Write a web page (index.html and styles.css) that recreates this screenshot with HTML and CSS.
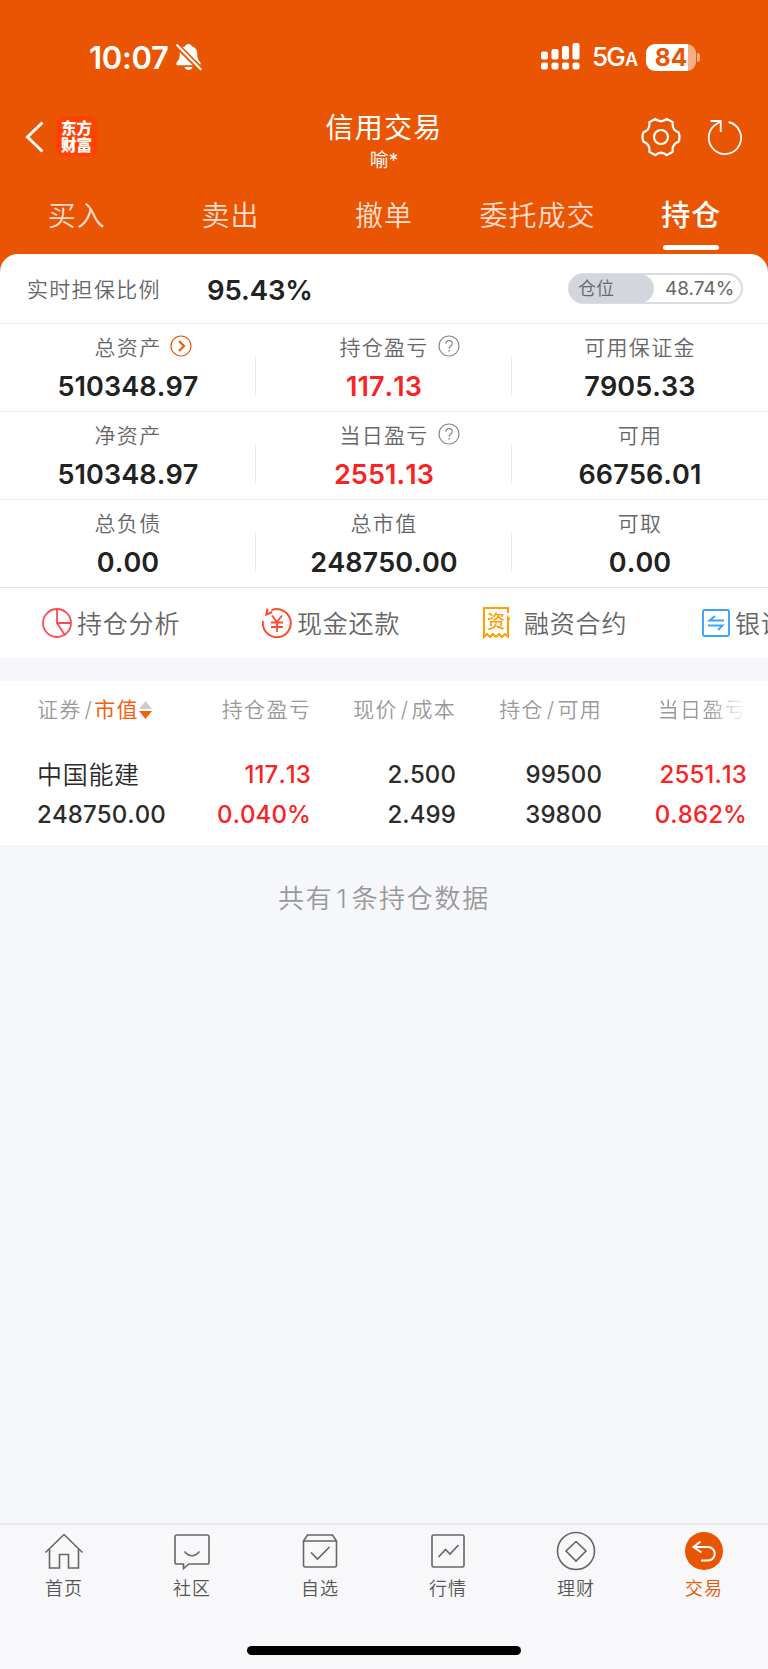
FILE: index.html
```html
<!DOCTYPE html>
<html lang="zh-CN">
<head>
    <meta charset="UTF-8">
    <meta name="viewport" content="width=device-width, initial-scale=1.0">
    <title>信用交易</title>
    <link rel="stylesheet" href="styles.css">
</head>
<body>
    <div class="app">
        <header class="header">
            <!-- Status bar -->
            <div class="status-bar">
                <span class="clock">10:07</span>
                <svg class="bell" width="26" height="28" viewBox="0 0 26 28">
                    <path d="M12.500 1c1.800 0 3 1 3.300 2.300 3.900 1.200 5.500 4 5.500 7.500 0 5 1.200 6.500 2.900 8.500 1 1.400.4 3-1.300 3H2.100c-1.700 0-2.300-1.600-1.300-3 1.700-2 2.900-3.500 2.900-8.500 0-3.500 1.600-6.300 5.500-7.500C9.500 2 10.700 1 12.500 1z" fill="#fff"/>
                    <path d="M8.500 24h8c-.6 1.800-2 3-4 3s-3.400-1.200-4-3z" fill="#fff"/>
                    <path d="M0 1.500l25 25" stroke="#ea5504" stroke-width="5.500"/>
                    <path d="M1.200 2.200l23.500 24" stroke="#fff" stroke-width="2.200" stroke-linecap="round"/>
                </svg>
                <svg class="signal" width="39" height="28" viewBox="0 0 39 28" fill="#fff">
                    <rect x="0" y="8.500" width="7" height="8" rx="2"/>
                    <rect x="10.500" y="6" width="7" height="10.500" rx="2"/>
                    <rect x="21" y="3" width="7" height="13.500" rx="2"/>
                    <rect x="31.500" y="0" width="7" height="16.500" rx="2"/>
                    <rect x="0" y="19.500" width="7" height="7" rx="2"/>
                    <rect x="10.500" y="19.500" width="7" height="7" rx="2"/>
                    <rect x="21" y="19.500" width="7" height="7" rx="2"/>
                    <rect x="31.500" y="19.500" width="7" height="7" rx="2"/>
                </svg>
                <span class="network">5G<small>A</small></span>
                <span class="battery">84</span>
                <span class="battery-tip"></span>
            </div>

            <!-- Title bar -->
            <div class="title-bar">
                <div class="title-left">
                    <svg width="19" height="32" viewBox="0 0 19 32" fill="none" stroke="#fff" stroke-width="3">
                        <path d="M17.500 1.500L2.500 16l15 14.500"/>
                    </svg>
                    <div class="logo">东方<br>财富</div>
                </div>
                <div class="title-center">
                    <h1>信用交易</h1>
                    <p>喻*</p>
                </div>
                <div class="title-right">
                    <svg width="40" height="40" viewBox="0 0 40 40" fill="none" stroke="#fff" stroke-width="2.200" stroke-linejoin="round">
                        <path d="M14.200 1.900Q20 6.600 25.800 1.900L31.700 5.300Q30.600 12.700 37.600 15.400Q39.400 20 37.600 24.600Q30.600 27.300 31.700 34.700L25.800 38.100Q20 33.400 14.200 38.100L8.300 34.700Q9.400 27.300 2.400 24.600Q0.600 20 2.400 15.400Q9.400 12.700 8.300 5.300Z"/>
                        <circle cx="20" cy="20" r="7"/>
                    </svg>
                    <svg width="36" height="36" viewBox="0 0 36 36" fill="none" stroke="#fff" stroke-width="1.800">
                        <path d="M21.500 3a16.200 16.200 0 1 1-13.500 3L13.500 2.500"/>
                        <path d="M3.500 2h10.200v11"/>
                    </svg>
                </div>
            </div>

            <!-- Trade tabs -->
            <nav class="trade-tabs">
                <a class="trade-tab">买入</a>
                <a class="trade-tab">卖出</a>
                <a class="trade-tab">撤单</a>
                <a class="trade-tab">委托成交</a>
                <a class="trade-tab active">持仓</a>
            </nav>
        </header>

        <!-- Account summary -->
        <section class="summary">
            <div class="ratio-row">
                <span class="ratio-label">实时担保比例</span>
                <span class="ratio-value">95.43%</span>
                <div class="position-pill">
                    <span class="pill-fill">仓位</span>
                    <span class="pill-value">48.74%</span>
                </div>
            </div>
            <div class="asset-row">
                <div class="asset">
                    <div class="asset-label">总资产
                        <svg class="asset-icon" width="22" height="22" viewBox="0 0 22 22" fill="none" stroke="#ea5504">
                            <circle cx="11" cy="11" r="10" stroke-width="1.200"/>
                            <path d="M9 6l5 5-5 5" stroke-width="2"/>
                        </svg>
                    </div>
                    <div class="asset-value">510348.97</div>
                </div>
                <div class="asset">
                    <div class="asset-label">持仓盈亏
                        <svg class="asset-icon" width="22" height="22" viewBox="0 0 22 22" fill="none" stroke="#888" stroke-width="1.200">
                            <circle cx="11" cy="11" r="10"/>
                            <path d="M7.800 8.800c0-4.200 6.600-4.200 6.600-.3 0 2.500-3.300 2.400-3.300 5.200M11.100 15v1.800"/>
                        </svg>
                    </div>
                    <div class="asset-value up">117.13</div>
                </div>
                <div class="asset">
                    <div class="asset-label">可用保证金</div>
                    <div class="asset-value">7905.33</div>
                </div>
            </div>
            <div class="asset-row">
                <div class="asset">
                    <div class="asset-label">净资产</div>
                    <div class="asset-value">510348.97</div>
                </div>
                <div class="asset">
                    <div class="asset-label">当日盈亏
                        <svg class="asset-icon" width="22" height="22" viewBox="0 0 22 22" fill="none" stroke="#888" stroke-width="1.200">
                            <circle cx="11" cy="11" r="10"/>
                            <path d="M7.800 8.800c0-4.200 6.600-4.200 6.600-.3 0 2.500-3.300 2.400-3.300 5.200M11.100 15v1.800"/>
                        </svg>
                    </div>
                    <div class="asset-value up">2551.13</div>
                </div>
                <div class="asset">
                    <div class="asset-label">可用</div>
                    <div class="asset-value">66756.01</div>
                </div>
            </div>
            <div class="asset-row">
                <div class="asset">
                    <div class="asset-label">总负债</div>
                    <div class="asset-value">0.00</div>
                </div>
                <div class="asset">
                    <div class="asset-label">总市值</div>
                    <div class="asset-value">248750.00</div>
                </div>
                <div class="asset">
                    <div class="asset-label">可取</div>
                    <div class="asset-value">0.00</div>
                </div>
            </div>
        </section>

        <!-- Shortcuts, scrolls sideways -->
        <section class="shortcuts">
            <a class="shortcut">
                <svg width="30" height="30" viewBox="0 0 30 30" fill="none" stroke="#ff4a50" stroke-width="1.800">
                    <circle cx="15" cy="15" r="14"/>
                    <path d="M15 1v14h14M15 15l7.500 11.500"/>
                </svg>
                <span>持仓分析</span>
            </a>
            <a class="shortcut">
                <svg width="30" height="30" viewBox="0 0 30 30" fill="none" stroke="#ff4a30" stroke-width="2">
                    <path d="M9.500 2.200A14 14 0 1 1 1 13M5.500 0.500L4.200 6.500l6-2.500"/>
                    <path d="M10 7.500l5 6.500 5-6.500M15 14v10M9 14.500h12M9 19h12" stroke-width="1.800"/>
                </svg>
                <span>现金还款</span>
            </a>
            <a class="shortcut wide">
                <svg width="30" height="32" viewBox="0 0 30 32" fill="none" stroke="#ffa000" stroke-width="2">
                    <path d="M26 6V1H2v29l3-3 3 3 3-3 3 3 3-3 3 3 3-3 3 2.500V12"/>
                    <path d="M25 8l3.500 4-3.500 3z" fill="#ffa000" stroke="none"/>
                    <text class="contract-glyph" x="14" y="21" text-anchor="middle">资</text>
                </svg>
                <span>融资合约</span>
            </a>
            <a class="shortcut">
                <svg width="28" height="28" viewBox="0 0 28 28" fill="none" stroke="#3aa4fa" stroke-width="1.900">
                    <rect x="1" y="1" width="26" height="26" rx="1.500"/>
                    <path d="M22 11.500H7.500L13 7M6 16.500h14.500L16 21"/>
                </svg>
                <span>银证转账</span>
            </a>
        </section>

        <!-- Holdings -->
        <section class="holdings">
            <div class="holdings-row holdings-head">
                <div class="sort">证券<i>/</i><b>市值</b><svg width="13" height="18" viewBox="0 0 13 18">
                        <path d="M6.500 0L13 8H0z" fill="#ccc"/>
                        <path d="M6.500 18L13 10H0z" fill="#f95e0c"/>
                    </svg>
                </div>
                <div>持仓盈亏</div>
                <div>现价<i>/</i>成本</div>
                <div>持仓<i>/</i>可用</div>
                <div class="fade">当日盈亏</div>
            </div>
            <div class="holdings-row holdings-item">
                <div><strong>中国能建</strong><span>248750.00</span></div>
                <div class="up"><span>117.13</span><span>0.040%</span></div>
                <div><span>2.500</span><span>2.499</span></div>
                <div><span>99500</span><span>39800</span></div>
                <div class="up"><span>2551.13</span><span>0.862%</span></div>
            </div>
        </section>
        <p class="total">共有<span>1</span>条持仓数据</p>

        <!-- Bottom navigation -->
        <footer class="bottom-bar">
            <nav class="bottom-nav">
                <a class="nav-item">
                    <svg width="40" height="40" viewBox="0 0 40 40">
                        <path d="M1.500 21.500L20 3.500l18.500 18M5.500 18v19h10V23.500h9V37h10V18"/>
                    </svg>
                    <span>首页</span>
                </a>
                <a class="nav-item">
                    <svg width="40" height="40" viewBox="0 0 40 40">
                        <path d="M5 4h30q2 0 2 2v25.500q0 1.500-2 1.500H17l-5.500 4.500V33H5q-2 0-2-1.500V6q0-2 2-2z"/>
                        <path d="M12.500 20.500q7.500 8.500 15 0"/>
                    </svg>
                    <span>社区</span>
                </a>
                <a class="nav-item">
                    <svg width="40" height="40" viewBox="0 0 40 40">
                        <path d="M3.500 10L7.500 4h25l4 6v24q0 2-2 2h-29q-2 0-2-2zM3.500 10h33M11 21.500l6.500 6.500L29.500 16"/>
                    </svg>
                    <span>自选</span>
                </a>
                <a class="nav-item">
                    <svg width="40" height="40" viewBox="0 0 40 40">
                        <rect x="4" y="4" width="32" height="32" rx="1.500"/>
                        <path d="M10.500 26l7-7.500 4.500 4.500 8.500-9"/>
                    </svg>
                    <span>行情</span>
                </a>
                <a class="nav-item">
                    <svg width="40" height="40" viewBox="0 0 40 40">
                        <circle cx="20" cy="20" r="18.500"/>
                        <path d="M20 10.500l10 9.500-10 10-10-10z"/>
                    </svg>
                    <span>理财</span>
                </a>
                <a class="nav-item active">
                    <svg width="40" height="40" viewBox="0 0 40 40">
                        <circle cx="20" cy="20" r="19"/>
                        <path d="M16.500 10.500L9.500 16l8 5.500M9.500 16H24a6.700 6.700 0 0 1 0 13.500H17"/>
                    </svg>
                    <span>交易</span>
                </a>
            </nav>
            <div class="home-indicator"></div>
        </footer>
    </div>
</body>
</html>
```
FILE: styles.css
```css
* {
    box-sizing: border-box;
}

body {
    margin: 0;
    background: #f6f7fa;
    font-family: Inter, "Noto Sans CJK SC", sans-serif;
    font-weight: 350;
    color: #222;
}

h1, p {
    margin: 0;
    font-weight: 350;
}

svg {
    display: block;
    flex: none;
}

i {
    font-style: normal;
    margin: 0 2px 0 3px;
}

.app {
    display: flex;
    flex-direction: column;
    width: 768px;
    height: 1669px;
    overflow: hidden;
}

/* Header */
.header {
    height: 272px;
    flex: none;
    background: #ea5504;
    color: #fff;
}

.status-bar {
    display: flex;
    align-items: center;
    height: 109px;
    padding: 5px 68px 0 89px;
}

.clock {
    width: 87px;
    font-size: 31px;
    font-weight: 600;
    letter-spacing: -0.300px;
}

.signal {
    margin-left: auto;
}

.network {
    margin-left: 12px;
    width: 54px;
    padding-top: 2px;
    font-size: 26px;
    font-weight: 500;
    letter-spacing: -1.800px;
    line-height: 28px;
    white-space: nowrap;
}

.network small {
    margin-left: 1px;
    font-size: 18px;
    font-weight: 600;
}

.battery {
    width: 50px;
    height: 27px;
    border-radius: 9px;
    background: linear-gradient(90deg, #fff 42px, #f6ae87 42px);
    color: #ea5504;
    font-size: 24.5px;
    font-weight: 700;
    line-height: 27px;
    text-align: center;
}

.battery-tip {
    width: 3px;
    height: 9px;
    margin-left: 1px;
    border-radius: 0 4px 4px 0;
    background: #f6ae87;
}

.title-bar {
    display: flex;
    align-items: flex-start;
    height: 76px;
    padding: 0 25px;
}

.title-left,
.title-right {
    display: flex;
    align-items: center;
    width: 200px;
    height: 41px;
    margin-top: 7px;
}

.title-right {
    justify-content: flex-end;
    gap: 26px;
}

.logo {
    width: 41px;
    height: 41px;
    margin-left: 12px;
    padding-top: 3px;
    border-radius: 8px;
    background: #ff4200;
    font-family: "Noto Sans CJK SC", sans-serif;
    font-size: 15.500px;
    font-weight: 900;
    line-height: 17px;
    text-align: center;
}

.title-center {
    flex: 1;
    text-align: center;
}

.title-center h1 {
    font-size: 28px;
    line-height: 38px;
    letter-spacing: 1.200px;
    font-weight: 400;
}

.title-center p {
    font-size: 19px;
    line-height: 28px;
    font-weight: 400;
}

.trade-tabs {
    display: grid;
    grid-template-columns: repeat(5, 1fr);
}

.trade-tab {
    display: flex;
    flex-direction: column;
    align-items: center;
    padding-top: 11px;
    font-size: 28px;
    line-height: 40px;
    letter-spacing: 1px;
    color: #ffdccb;
}

.trade-tab.active {
    color: #fff;
    font-weight: 500;
    font-size: 29px;
}

.trade-tab.active::after {
    content: "";
    width: 56px;
    height: 5px;
    margin-top: 9px;
    border-radius: 3px;
    background: #fff;
}

/* Account summary */
.summary {
    margin-top: -18px;
    border-radius: 18px 18px 0 0;
    background: #fff;
}

.ratio-row {
    display: flex;
    align-items: center;
    height: 69px;
    padding: 0 25px 0 27px;
}

.ratio-label {
    width: 180px;
    padding-bottom: 2px;
    font-size: 21px;
    letter-spacing: 1.300px;
    color: #666;
}

.ratio-value {
    padding-top: 2px;
    font-size: 27.500px;
    font-weight: 600;
    letter-spacing: -0.100px;
}

.position-pill {
    display: flex;
    width: 175px;
    height: 31px;
    margin-left: auto;
    border: 2px solid #d9dce2;
    border-radius: 16px;
    font-size: 18px;
    line-height: 27px;
    color: #666;
}

.pill-fill {
    width: 85px;
    margin: -1px 0 -1px -1px;
    padding: 1px 0 0 9px;
    border-radius: 16px;
    background: #d3d6dc;
}

.pill-value {
    padding-left: 11px;
    font-size: 19px;
    font-weight: 400;
}

.asset-row {
    display: grid;
    grid-template-columns: repeat(3, 1fr);
    height: 88px;
    border-top: 1px solid #ececec;
}

.asset {
    padding-top: 9px;
    text-align: center;
    background: linear-gradient(#e8e8e8, #e8e8e8) no-repeat right 33px / 1px 38px;
}

.asset:last-child {
    background: none;
}

.asset-label {
    position: relative;
    width: max-content;
    margin: 0 auto;
    font-size: 21px;
    line-height: 30px;
    letter-spacing: 1.300px;
    color: #666;
}

.asset-icon {
    position: absolute;
    left: calc(100% + 9px);
    top: 2px;
}

.asset-value {
    margin-top: 8px;
    font-size: 27px;
    font-weight: 600;
    line-height: 32px;
    font-kerning: none;
    letter-spacing: 0.100px;
}

.up,
.asset-value.up {
    color: #fb2224;
}

/* Shortcuts */
.shortcuts {
    display: flex;
    height: 71px;
    padding-left: 42px;
    overflow: hidden;
    border-top: 1px solid #e6e6e6;
    background: #fff;
}

.shortcut {
    display: flex;
    flex: none;
    align-items: center;
    gap: 5px;
    width: 220px;
    font-size: 25px;
    letter-spacing: 0.800px;
    color: #666;
    white-space: nowrap;
}

.shortcut span {
    padding-bottom: 3px;
}

.shortcut.wide {
    gap: 12px;
}

.contract-glyph {
    font-size: 18px;
    font-weight: 500;
    letter-spacing: 0;
    fill: #ffa000;
    stroke: none;
}

/* Holdings */
.holdings {
    margin-top: 23px;
    height: 164px;
    background: #fff;
}

.holdings-row {
    display: grid;
    grid-template-columns: 151px 123px 145px 146px 145px;
    padding-left: 37px;
    text-align: right;
}

.holdings-row > :first-child {
    text-align: left;
}

.holdings-head {
    padding-top: 14px;
    font-size: 21px;
    line-height: 30px;
    letter-spacing: 1.300px;
    color: #999;
}

.sort {
    display: flex;
    align-items: center;
    white-space: nowrap;
}

.sort i {
    margin-right: 1px;
}

.sort b {
    font-weight: 400;
    color: #f95e0c;
}

.fade {
    -webkit-mask-image: linear-gradient(90deg, #000 105px, transparent 145px);
    mask-image: linear-gradient(90deg, #000 105px, transparent 145px);
}

.holdings-item {
    padding-top: 30px;
    font-size: 24px;
    font-weight: 550;
    line-height: 40px;
    font-kerning: none;
    letter-spacing: 0.100px;
    color: #2b2b2b;
}

.holdings-item span,
.holdings-item strong {
    display: block;
}

.holdings-item strong {
    font-size: 25px;
    font-weight: 350;
    letter-spacing: 0.700px;
}

.total {
    margin-top: 34px;
    font-size: 26px;
    line-height: 40px;
    letter-spacing: 1.700px;
    text-align: center;
    color: #999;
}

.total span {
    margin: 0 3px;
}

/* Bottom navigation */
.bottom-bar {
    height: 146px;
    margin-top: auto;
    border-top: 2px solid #e9eaef;
    background: #f8f8fb;
}

.bottom-nav {
    display: grid;
    grid-template-columns: repeat(6, 1fr);
    height: 121px;
}

.nav-item {
    display: flex;
    flex-direction: column;
    align-items: center;
    padding-top: 6px;
    font-size: 18px;
    line-height: 26px;
    letter-spacing: 1px;
    color: #555;
}

.nav-item span {
    margin-top: 5px;
}

.nav-item svg {
    fill: none;
    stroke: #666;
    stroke-width: 1.600;
}

.nav-item.active {
    color: #ea5504;
}

.nav-item.active circle {
    fill: #ea5504;
    stroke: none;
}

.nav-item.active path {
    stroke: #fff;
    stroke-width: 2;
}

.home-indicator {
    width: 274px;
    height: 9px;
    margin: 0 auto;
    border-radius: 5px;
    background: #000;
}
```
